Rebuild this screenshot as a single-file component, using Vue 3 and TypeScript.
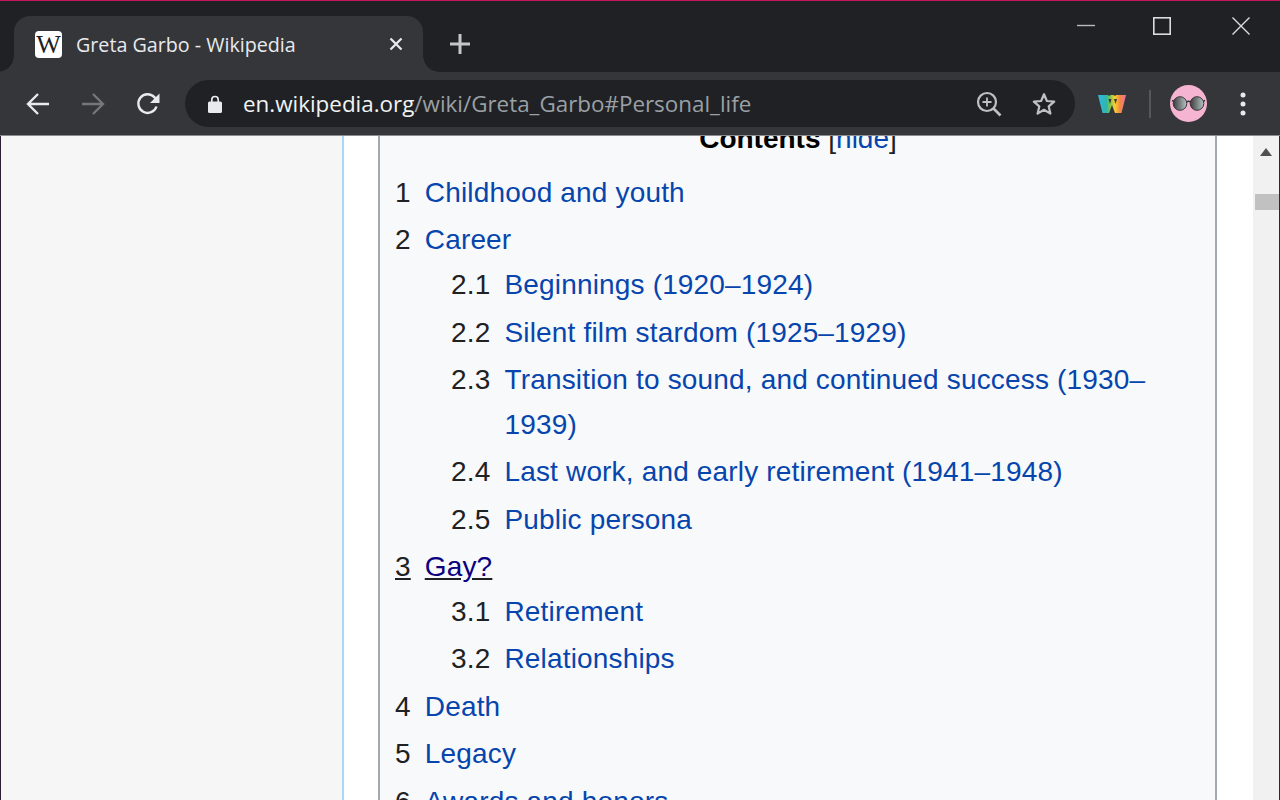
<script setup lang="ts">
interface TocEntry {
  num: string
  label: string
  visited?: boolean
  children?: TocEntry[]
}

const tocEntries: TocEntry[] = [
  { num: '1', label: 'Childhood and youth' },
  {
    num: '2',
    label: 'Career',
    children: [
      { num: '2.1', label: 'Beginnings (1920–1924)' },
      { num: '2.2', label: 'Silent film stardom (1925–1929)' },
      { num: '2.3', label: 'Transition to sound, and continued success (1930–1939)' },
      { num: '2.4', label: 'Last work, and early retirement (1941–1948)' },
      { num: '2.5', label: 'Public persona' },
    ],
  },
  {
    num: '3',
    label: 'Gay?',
    visited: true,
    children: [
      { num: '3.1', label: 'Retirement' },
      { num: '3.2', label: 'Relationships' },
    ],
  },
  { num: '4', label: 'Death' },
  { num: '5', label: 'Legacy' },
  { num: '6', label: 'Awards and honors' },
]
</script>

<template>
  <div class="window">
    <header class="chrome">
      <div class="tabstrip">
        <div class="tab">
          <span class="favicon">W</span>
          <span class="tab-title">Greta Garbo - Wikipedia</span>
          <svg class="tab-close" width="16" height="16" viewBox="0 0 16 16">
            <path d="M2.500 2.500l11 11M13.500 2.500l-11 11" stroke="#e8eaed" stroke-width="2.300" fill="none" />
          </svg>
        </div>
        <svg class="new-tab" width="22" height="22" viewBox="0 0 22 22">
          <path d="M11 1v20M1 11h20" stroke="#c4c7ca" stroke-width="3" fill="none" />
        </svg>
        <div class="win-controls">
          <svg class="win-min" width="18" height="18" viewBox="0 0 18 18"><path d="M0 8.500h18" stroke="#b9babb" stroke-width="1.400" /></svg>
          <svg width="18" height="18" viewBox="0 0 18 18"><rect x=".8" y=".8" width="16.400" height="16.400" fill="none" stroke="#dcdcdd" stroke-width="1.600" /></svg>
          <svg width="18" height="18" viewBox="0 0 18 18"><path d="M.5.5l17 17M17.500.5l-17 17" stroke="#dcdcdd" stroke-width="1.400" fill="none" /></svg>
        </div>
      </div>

      <div class="toolbar">
        <div class="nav-buttons">
          <svg width="24" height="24" viewBox="0 0 24 24"><path d="M23 12H2M12 2L2 12l10 10" stroke="#e8eaed" stroke-width="2.400" fill="none" /></svg>
          <svg width="24" height="24" viewBox="0 0 24 24"><path d="M1 12h21M12 2l10 10-10 10" stroke="#74767a" stroke-width="2.400" fill="none" /></svg>
          <svg width="24" height="24" viewBox="0 0 24 24">
            <path d="M20.500 14.500A9.300 9.300 0 1 1 18.600 5.400L21 8" stroke="#e8eaed" stroke-width="2.400" fill="none" />
            <path d="M23.500 1.500v9.500h-9.500z" fill="#e8eaed" />
          </svg>
        </div>

        <div class="omnibox">
          <svg class="lock" width="14" height="18" viewBox="0 0 14 18">
            <path d="M3.800 7V4.700a3.200 3.200 0 0 1 6.400 0V7" stroke="#e8eaed" stroke-width="1.700" fill="none" />
            <rect x="0" y="6.500" width="14" height="11.500" rx="1.600" fill="#e8eaed" />
          </svg>
          <span class="url"><span class="host">en.wikipedia.org</span>/wiki/Greta_Garbo#Personal_life</span>
          <svg class="zoom-icon" width="26" height="26" viewBox="0 0 26 26">
            <circle cx="11" cy="11" r="9" stroke="#bdc1c6" stroke-width="2.200" fill="none" />
            <path d="M17.500 17.500l7 7" stroke="#bdc1c6" stroke-width="2.600" fill="none" />
            <path d="M11 6.500v9M6.500 11h9" stroke="#bdc1c6" stroke-width="1.800" fill="none" />
          </svg>
          <svg class="star" width="26" height="26" viewBox="0 0 26 26">
            <path d="M13 3.200l2.900 6.800 7.300.6-5.500 4.800 1.700 7.200L13 18.800l-6.400 3.800 1.700-7.200-5.500-4.800 7.300-.6z" stroke="#bdc1c6" stroke-width="2.200" stroke-linejoin="round" fill="none" />
          </svg>
        </div>

        <svg class="ext" width="28" height="18" viewBox="0 0 28 18">
          <defs>
            <linearGradient id="rainbow" x1="0" y1="0" x2="1" y2="0">
              <stop offset="0" stop-color="#33b5e5" />
              <stop offset="0.3" stop-color="#2fb6a8" />
              <stop offset="0.45" stop-color="#8cc63f" />
              <stop offset="0.6" stop-color="#f7d038" />
              <stop offset="0.78" stop-color="#f58a3c" />
              <stop offset="1" stop-color="#ec6fa8" />
            </linearGradient>
          </defs>
          <path d="M0 0h10l.8 1 2-1h2.400l2 1 .8-1H28l-4.500 18h-6.500L14 10l-3 8H4.500z" fill="url(#rainbow)" />
          <path d="M10.500 4l1.500 5 1.500-5zM16 4l1.500 5 1.500-5z" fill="#35363a" />
        </svg>
        <span class="divider"></span>
        <svg class="avatar" width="37" height="37" viewBox="0 0 37 37">
          <defs>
            <linearGradient id="lens" x1="0" y1="0" x2="1" y2="0">
              <stop offset="0" stop-color="#3e3a3c" />
              <stop offset="1" stop-color="#b4c6c6" />
            </linearGradient>
          </defs>
          <circle cx="18.500" cy="18.500" r="18.500" fill="#f5b5d2" />
          <circle cx="10" cy="18.500" r="6.800" fill="url(#lens)" stroke="#3a3436" stroke-width="1" />
          <circle cx="27" cy="18.500" r="6.800" fill="url(#lens)" stroke="#3a3436" stroke-width="1" />
          <path d="M16.500 17q2-1.500 4 0M2 15.500l2 .8M35 15.500l-2 .8" stroke="#3a3436" stroke-width="1.400" fill="none" />
        </svg>
        <svg class="kebab" width="6" height="24" viewBox="0 0 6 24">
          <circle cx="3" cy="3" r="2.500" fill="#e8eaed" />
          <circle cx="3" cy="12" r="2.500" fill="#e8eaed" />
          <circle cx="3" cy="21" r="2.500" fill="#e8eaed" />
        </svg>
      </div>
    </header>

    <div class="viewport">
      <main class="page">
        <div class="content">
          <div class="toc">
            <div class="toc-title"><strong>Contents</strong> <span class="toggle">[<a>hide</a>]</span></div>
            <ul class="toc-list">
              <li v-for="entry in tocEntries" :key="entry.num">
                <div class="toc-row" :class="{ visited: entry.visited }">
                  <span class="toc-num">{{ entry.num }}</span>
                  <span class="toc-text">{{ entry.label }}</span>
                </div>
                <ul v-if="entry.children" class="toc-sub">
                  <li v-for="child in entry.children" :key="child.num">
                    <div class="toc-row">
                      <span class="toc-num">{{ child.num }}</span>
                      <span class="toc-text">{{ child.label }}</span>
                    </div>
                  </li>
                </ul>
              </li>
            </ul>
          </div>
        </div>
      </main>
      <aside class="scrollbar">
        <span class="scroll-up"></span>
        <span class="scroll-thumb"></span>
      </aside>
    </div>
  </div>
</template>

<style>
html,
body {
  margin: 0;
  height: 100%;
  overflow: hidden;
}
</style>

<style scoped>
.window {
  width: 1280px;
  height: 800px;
  display: flex;
  flex-direction: column;
  overflow: hidden;
  background: #f6f6f6;
}

.chrome {
  position: relative;
  z-index: 2;
  flex: none;
  font-family: "Open Sans", "Noto Sans", sans-serif;
}

.tabstrip {
  height: 72px;
  box-sizing: border-box;
  background: #202124;
  border-top: 1px solid #c5155c;
  padding: 15px 0 0 14px;
  display: flex;
  align-items: flex-start;
}

.tab {
  position: relative;
  width: 409px;
  height: 56px;
  box-sizing: border-box;
  background: #35363a;
  border-radius: 16px 16px 0 0;
  padding-left: 21px;
  display: flex;
  align-items: center;
}

.tab::before,
.tab::after {
  content: "";
  position: absolute;
  bottom: 0;
  width: 16px;
  height: 16px;
  background: radial-gradient(circle at 0 0, #202124 15.500px, #35363a 16px);
}

.tab::before {
  left: -16px;
}

.tab::after {
  right: -16px;
  background: radial-gradient(circle at 100% 0, #202124 15.500px, #35363a 16px);
}

.favicon {
  width: 27px;
  height: 27px;
  background: #fff;
  border-radius: 4px;
  color: #202124;
  font: 26px/28px "Liberation Serif", serif;
  text-align: center;
}

.tab-title {
  margin-left: 14px;
  color: #e8eaed;
  font-size: 19.700px;
  white-space: nowrap;
}

.tab-close {
  position: absolute;
  left: 374px;
  top: 20px;
}

.new-tab {
  margin: 17px 0 0 26px;
}

.win-controls {
  margin-left: auto;
  padding: 1px 30px 0 0;
  display: flex;
  gap: 61px;
}

.win-min {
  margin-right: -3px;
}

.toolbar {
  height: 64px;
  box-sizing: border-box;
  background: #35363a;
  border-bottom: 1px solid #8b8c8f;
  padding: 8px 0 8px 26px;
  display: flex;
  align-items: center;
}

.nav-buttons {
  display: flex;
  gap: 31px;
  width: 159px;
  flex: none;
}

.omnibox {
  width: 890px;
  height: 47px;
  flex: none;
  box-sizing: border-box;
  background: #202124;
  border-radius: 24px;
  padding-left: 23px;
  display: flex;
  align-items: center;
}

.lock {
  flex: none;
}

.url {
  margin-left: 21px;
  color: #9aa0a6;
  font-size: 22.400px;
  white-space: nowrap;
}

.host {
  color: #f1f3f4;
}

.zoom-icon {
  margin-left: auto;
}

.star {
  margin: 0 18px 0 29px;
}

.ext {
  margin-left: 23px;
  flex: none;
}

.divider {
  width: 2px;
  height: 28px;
  margin-left: 23px;
  background: #56575b;
  flex: none;
}

.avatar {
  margin-left: 19px;
  flex: none;
}

.kebab {
  margin-left: 33px;
  flex: none;
}

.viewport {
  flex: 1;
  min-height: 0;
  display: flex;
  border-left: 1px solid #2a1f33;
  border-right: 1px solid #2a2a2a;
  overflow: hidden;
}

.page {
  flex: 1;
  min-width: 0;
  padding-left: 341px;
  font-family: "Liberation Sans", Arial, sans-serif;
}

.content {
  display: flow-root;
  height: 100%;
  background: #fff;
  border-left: 2px solid #a7d7f9;
  padding-left: 34px;
  padding-right: 36px;
  box-sizing: border-box;
}

.toc {
  min-height: calc(100% + 21px);
  box-sizing: border-box;
  margin-top: -21px;
  background: #f8f9fa;
  border: 2px solid #a2a9b1;
  border-bottom: none;
  padding: 0 14px 0 15px;
  font-size: 28px;
  letter-spacing: 0.170px;
  line-height: 44.800px;
  color: #202122;
}

.toc-title {
  text-align: center;
  color: #000;
  margin-bottom: 9px;
  letter-spacing: 0;
}

.toggle {
  font-weight: normal;
  color: #202122;
}

.toggle a {
  color: #0645ad;
}

.toc-list,
.toc-sub {
  list-style: none;
  margin: 0;
  padding: 0;
}

.toc-sub {
  margin-left: 56px;
}

.toc-list li {
  margin-bottom: 2.660px;
}

.toc-row {
  display: flex;
}

.toc-num {
  flex: none;
  padding-right: 14px;
}

.toc-text {
  color: #0645ad;
}

.toc-row.visited {
  text-decoration: underline;
}

.toc-row.visited .toc-text {
  color: #0b0080;
}

.scrollbar {
  position: relative;
  flex: none;
  width: 26px;
  background: #f1f1f1;
}

.scroll-up {
  position: absolute;
  left: 7px;
  top: 12px;
  border-left: 6.500px solid transparent;
  border-right: 6.500px solid transparent;
  border-bottom: 8px solid #505050;
}

.scroll-thumb {
  position: absolute;
  left: 2px;
  right: 0;
  top: 58px;
  height: 16px;
  background: #c1c1c1;
}
</style>
